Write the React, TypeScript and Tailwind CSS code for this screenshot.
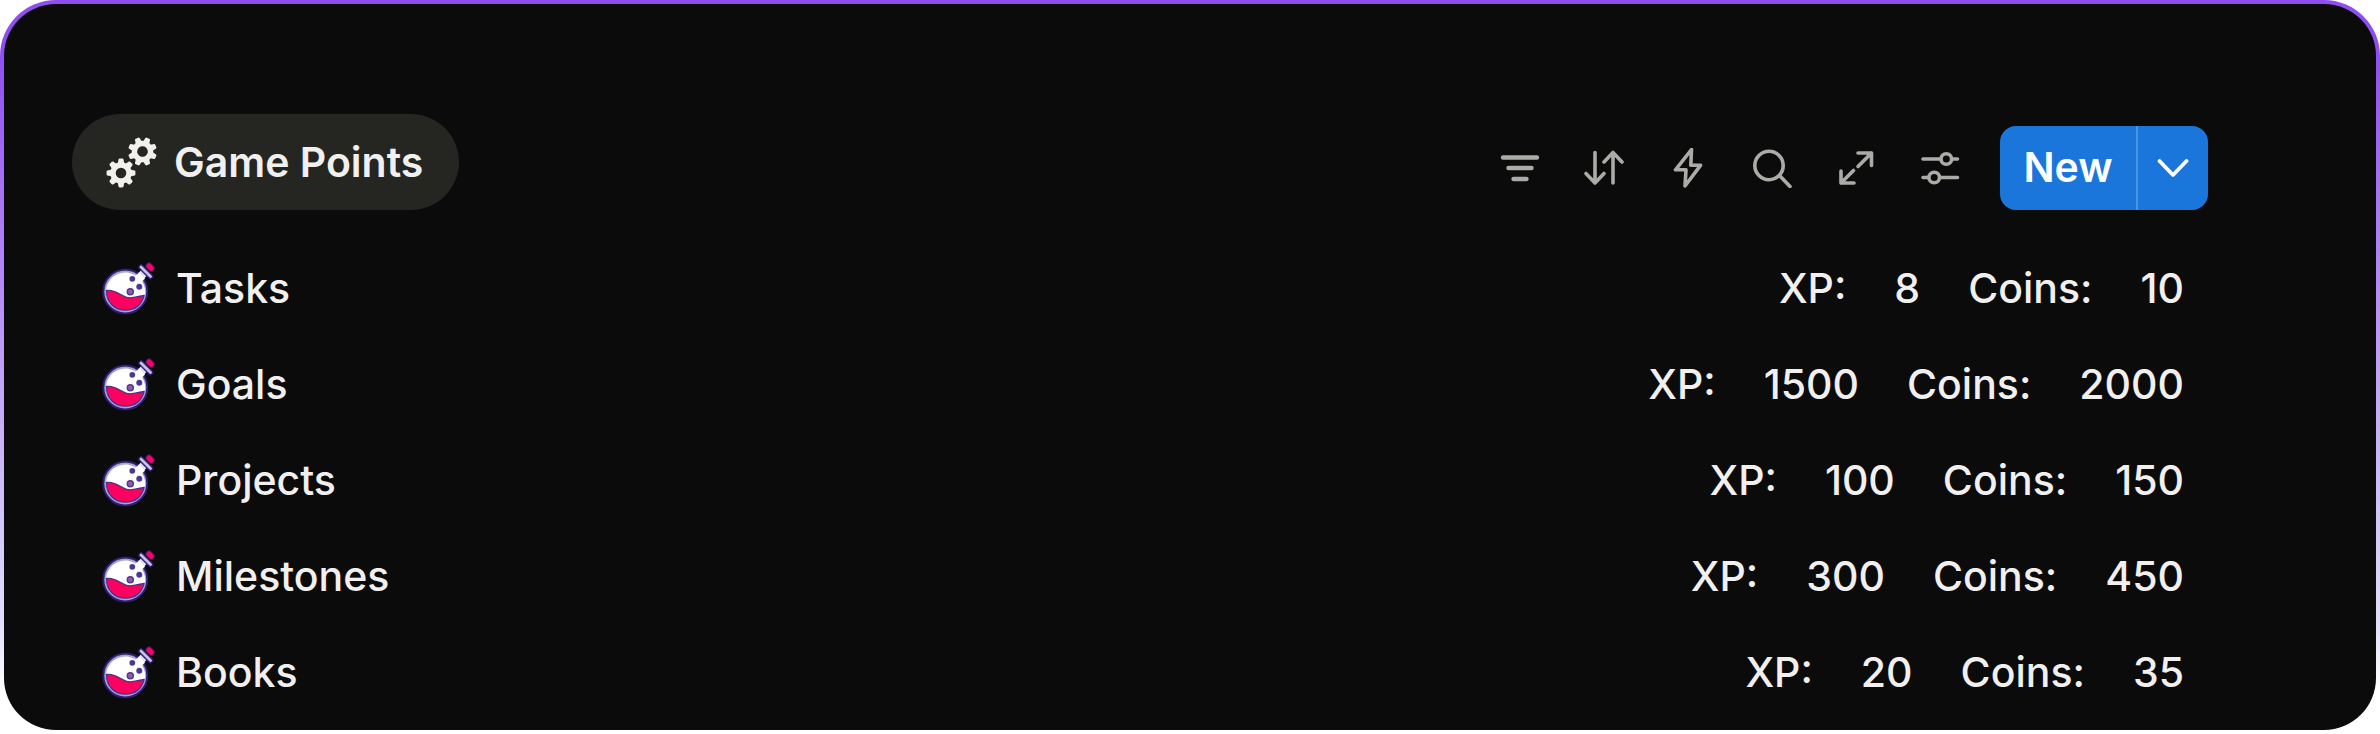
import type { ReactNode } from "react";

const rewards = [
  { name: "Tasks", xp: 8, coins: 10 },
  { name: "Goals", xp: 1500, coins: 2000 },
  { name: "Projects", xp: 100, coins: 150 },
  { name: "Milestones", xp: 300, coins: 450 },
  { name: "Books", xp: 20, coins: 35 },
];

const toothAngles = [0, 45, 90, 135, 180, 225, 270, 315];

function Gear({ x, y, turn = 0 }: { x: number; y: number; turn?: number }) {
  return (
    <g transform={`translate(${x} ${y}) rotate(${turn})`}>
      <circle r="8" fill="none" stroke="currentColor" strokeWidth="5.4" />
      {toothAngles.map((a) => (
        <path key={a} d="M-3.4 -9 L-2.5 -13.6 Q-2.3 -14.4 -1.4 -14.4 H1.4 Q2.3 -14.4 2.5 -13.6 L3.4 -9 Z" fill="currentColor" transform={`rotate(${a})`} />
      ))}
    </g>
  );
}

function GearsIcon() {
  return (
    <svg viewBox="0 0 52 52" className="size-[52px] shrink-0" aria-hidden>
      <Gear x={36.5} y={14.5} turn={22.5} />
      <Gear x={15} y={36} />
    </svg>
  );
}

function PotionIcon() {
  return (
    <svg viewBox="0 0 52 52" className="size-[52px] shrink-0 overflow-visible" aria-hidden>
      <circle cx="23.3" cy="28.5" r="22" fill="#a99fd6" stroke="#2b1f72" strokeWidth="2" />
      <path d="M35 11 L40 6 L46 12 L41 17 Z" fill="#e4e0ee" stroke="#2b1f72" strokeWidth="1" />
      <path d="M4 28 A19.6 19.6 0 0 1 34 12.5 L37 9.5 L43 15.5 L40 18.5 A19.6 19.6 0 0 1 43 32 L24 38 Z" fill="#ffffff" />
      <path d="M4.5 27.5 C13 26 17 32 25 34.5 C31 36 36 33 42 32.5 C39.5 42 33 47 23.5 47 C13 47 4.5 40 4.5 27.5 Z" fill="#ff0060" stroke="#50308c" strokeWidth="1.3" />
      <circle cx="30.3" cy="15.8" r="2.9" fill="#4b3a91" />
      <circle cx="37.3" cy="23.8" r="3" fill="#4b3a91" />
      <circle cx="28.3" cy="28.7" r="3" fill="#9b5a9e" stroke="#4b3a91" strokeWidth="1.5" />
      <path d="M39 4 L48.5 13.5" stroke="#2b1f72" strokeWidth="5.6" strokeLinecap="round" />
      <path d="M39 4 L48.5 13.5" stroke="#c9c1e4" strokeWidth="2.8" strokeLinecap="round" />
      <path d="M47 3 L49.3 5.3" stroke="#3d1a6a" strokeWidth="7" strokeLinecap="round" />
      <path d="M47 3 L49.3 5.3" stroke="#f2065f" strokeWidth="5" strokeLinecap="round" />
    </svg>
  );
}

function ToolButton({ label, children }: { label: string; children: ReactNode }) {
  return (
    <button type="button" aria-label={label} className="text-[#acaba8] hover:text-white transition-colors">
      <svg
        viewBox="0 0 40 40"
        className="size-10"
        fill="none"
        stroke="currentColor"
        strokeWidth="3.6"
        strokeLinecap="round"
        strokeLinejoin="round"
        aria-hidden
      >
        {children}
      </svg>
    </button>
  );
}

function Toolbar() {
  return (
    <div className="flex items-center gap-11">
      <ToolButton label="Filter">
        <path d="M3 9.5 H37 M8.5 20 H31.5 M13.5 31 H26.5" strokeWidth="4.4" />
      </ToolButton>
      <ToolButton label="Sort">
        <path d="M11 4.5 V35 M2 25.5 L11 35 L20 25.5 M29 35 V4.5 M20 14 L29 4.5 L38 14" />
      </ToolButton>
      <ToolButton label="Automations">
        <path d="M23.5 1.5 L7.5 21.8 H18 L17 38 L32.5 17.3 H22.8 Z" />
      </ToolButton>
      <ToolButton label="Search">
        <circle cx="17" cy="17.5" r="14.2" />
        <path d="M27.5 27.5 L38 38.5" />
      </ToolButton>
      <ToolButton label="Expand">
        <path d="M22 18.5 L35.5 5 M22 5 H35.5 V17.5 M17.5 22.5 L5 35 M5 23 V35 H18" />
      </ToolButton>
      <ToolButton label="View settings">
        <path d="M3 11 H20.5 M33 11 H37.5 M3 29.5 H7.5 M20.5 29.5 H37.5" />
        <circle cx="26.3" cy="11" r="5.3" />
        <circle cx="14.2" cy="29.5" r="5.3" />
      </ToolButton>
    </div>
  );
}

export default function App() {
  return (
    <div className="bg-white font-['Inter','Liberation_Sans',sans-serif]">
      <div className="rounded-[56px] p-1 bg-[linear-gradient(180deg,#8f4ff0_0px,#8f4ff0_52px,#b892f5_310px,#e0defc_620px,#ffffff_690px)]">
        <main className="rounded-[52px] bg-[#0b0b0b] pt-[110px] pr-[168px] pb-[9px] pl-[68px] text-[#f1f0ef]">
          <header className="flex items-end justify-between">
            <h1 className="flex h-24 items-center gap-4 rounded-full bg-[#252522] pt-0.5 pr-9 pl-[34px] text-[41px] font-semibold">
              <GearsIcon />
              Game Points
            </h1>
            <div className="flex h-[84px] items-center gap-10">
              <Toolbar />
              <div className="flex h-full overflow-hidden rounded-2xl bg-[#1a76db] text-white">
                <button type="button" className="w-[136px] text-[41px] font-semibold hover:bg-[#1568c4]">
                  New
                </button>
                <button
                  type="button"
                  aria-label="More options"
                  className="flex w-[72px] items-center justify-center border-l-2 border-[#4d93e3] hover:bg-[#1568c4]"
                >
                  <svg viewBox="0 0 32 20" className="h-5 w-8" fill="none" stroke="currentColor" strokeWidth="3.8" strokeLinecap="round" strokeLinejoin="round" aria-hidden>
                    <path d="M2.5 3 L16 17 L29.5 3" />
                  </svg>
                </button>
              </div>
            </div>
          </header>

          <ul className="mt-[31px] pr-6 pl-[30px] text-[41px] font-medium">
            {rewards.map((r) => (
              <li key={r.name} className="flex h-24 items-center justify-between">
                <div className="flex items-center gap-[22px]">
                  <PotionIcon />
                  {r.name}
                </div>
                <dl className="flex gap-12">
                  <dt>XP:</dt>
                  <dd>{r.xp}</dd>
                  <dt>Coins:</dt>
                  <dd>{r.coins}</dd>
                </dl>
              </li>
            ))}
          </ul>
        </main>
      </div>
    </div>
  );
}
